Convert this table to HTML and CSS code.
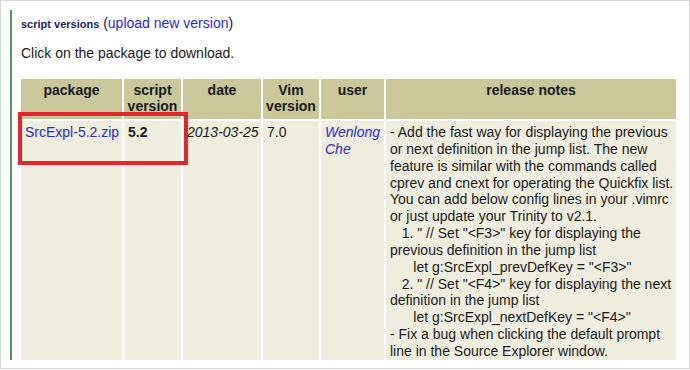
FILE: index.html
```html
<!DOCTYPE html>
<html>
<head>
<meta charset="utf-8">
<link rel="stylesheet" href="styles.css">
</head>
<body>
<div class="frame">
  <div class="content">
    <div class="title"><span class="section">script versions</span> (<a href="#" class="link">upload new version</a>)</div>
    <p class="hint">Click on the package to download.</p>
    <table class="versions">
      <tr>
        <th class="c-pkg">package</th>
        <th class="c-ver">script version</th>
        <th class="c-date">date</th>
        <th class="c-vim">Vim version</th>
        <th class="c-user">user</th>
        <th class="c-notes">release notes</th>
      </tr>
      <tr>
        <td class="one"><a href="#" class="link">SrcExpl-5.2.zip</a></td>
        <td class="one"><b>5.2</b></td>
        <td class="one"><i>2013-03-25</i></td>
        <td class="one">7.0</td>
        <td><i><a href="#" class="link">Wenlong Che</a></i></td>
        <td class="notes">- Add the fast way for displaying the previous<br>or next definition in the jump list. The new<br>feature is similar with the commands called<br>cprev and cnext for operating the Quickfix list.<br>You can add below config lines in your .vimrc<br>or just update your Trinity to v2.1.<br>&nbsp;&nbsp;&nbsp;1. " // Set "&lt;F3&gt;" key for displaying the<br>previous definition in the jump list<br>&nbsp;&nbsp;&nbsp;&nbsp;&nbsp;&nbsp;let g:SrcExpl_prevDefKey = "&lt;F3&gt;"<br>&nbsp;&nbsp;&nbsp;2. " // Set "&lt;F4&gt;" key for displaying the next<br>definition in the jump list<br>&nbsp;&nbsp;&nbsp;&nbsp;&nbsp;&nbsp;let g:SrcExpl_nextDefKey = "&lt;F4&gt;"<br>- Fix a bug when clicking the default prompt<br>line in the Source Explorer window.</td>
      </tr>
    </table>
    <div class="highlight"></div>
  </div>
</div>
</body>
</html>
```
FILE: styles.css
```css
html, body {
  margin: 0;
  padding: 0;
  background: #ffffff;
}
body {
  font-family: "Liberation Sans", Arial, sans-serif;
  font-size: 14px;
  color: #1a1a1a;
}
.frame {
  box-sizing: border-box;
  width: 690px;
  height: 369px;
  border: 1px solid #d8d8d8;
  padding: 9px 11px 0 9px;
}
.content {
  position: relative;
  height: 350px;
  overflow: hidden;
  border-left: 2px solid #4e9a5e;
  padding-left: 8px;
  padding-top: 4px;
  box-sizing: border-box;
}
.title {
  line-height: 18px;
  margin-left: 1px;
}
.section {
  font-size: 11px;
  font-weight: bold;
  color: #1c1c66;
}
.link {
  color: #2b2bcc;
  text-decoration: none;
}
.hint {
  margin: 11px 0 15px 1px;
  line-height: 18px;
}
.versions {
  border-collapse: separate;
  border-spacing: 2px;
  table-layout: fixed;
  width: 659px;
  margin-left: -1px;
}
.versions th {
  background: #c8c89b;
  font-weight: bold;
  line-height: 16px;
  padding: 3px 3px 5px;
  text-align: center;
  vertical-align: top;
}
.versions td {
  background: #efeede;
  line-height: 16.85px;
  padding: 3px 2px 4px 4px;
  vertical-align: top;
}
.versions td.one {
  white-space: nowrap;
}
.versions td.notes {
  white-space: nowrap;
  padding-left: 4px;
}
.c-pkg { width: 95px; }
.c-ver { width: 51px; }
.c-date { width: 72px; }
.c-vim { width: 50px; }
.c-user { width: 57px; }
.c-notes { width: 284px; }
.highlight {
  position: absolute;
  left: 6px;
  top: 102px;
  width: 162px;
  height: 45px;
  border: 4px solid #e2262c;
}
```
